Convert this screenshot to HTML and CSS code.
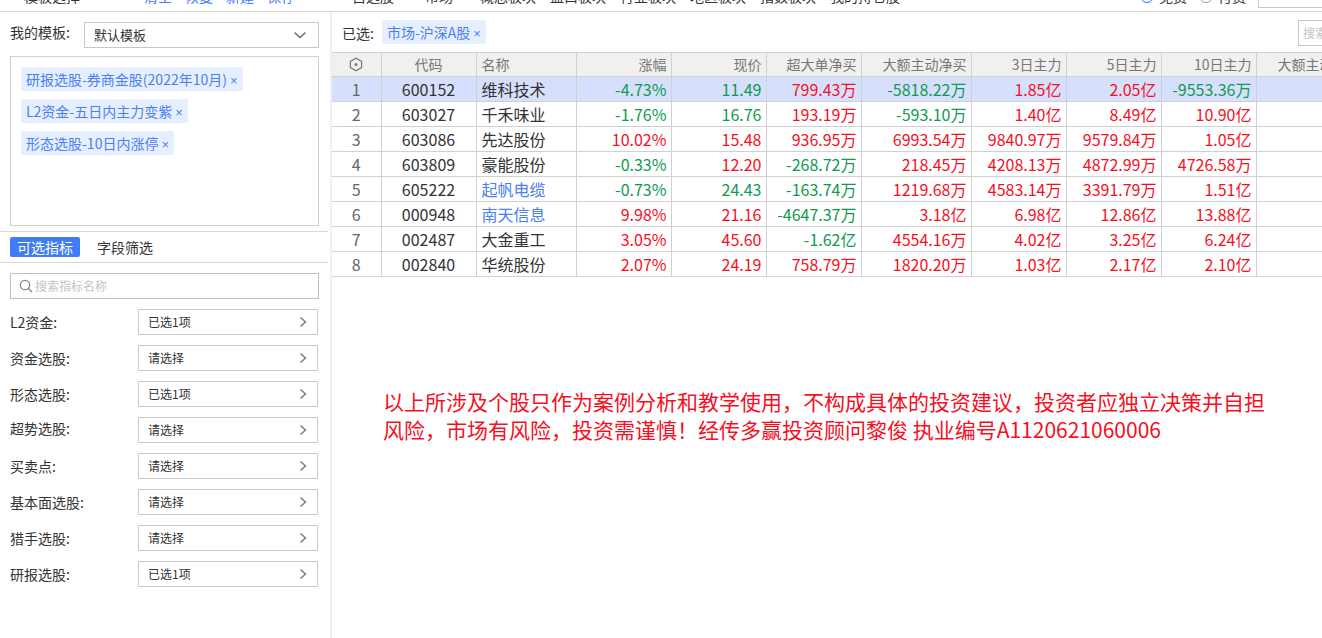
FILE: index.html
```html
<!DOCTYPE html>
<html lang="zh-CN">
<head>
    <meta charset="UTF-8">
    <title>选股</title>
    <link rel="stylesheet" href="styles.css">
</head>
<body>

<div class="topbar">
    <div class="topbar-left">
        <span class="dot"></span>
        <span class="topbar-title">模板选择</span>
        <a class="top-link first">清空</a>
        <a class="top-link">恢复</a>
        <a class="top-link">新建</a>
        <a class="top-link">保存</a>
        <svg class="top-icon" width="14" height="14" viewBox="0 0 14 14"><circle cx="5" cy="7" r="3.5" fill="none" stroke="#555"/><circle cx="10" cy="7" r="3.5" fill="none" stroke="#555"/></svg>
    </div>
    <div class="topbar-right">
        <span class="market first">自选股</span>
        <span class="market second">市场</span>
        <span class="market">概念板块</span>
        <span class="market">盘口板块</span>
        <span class="market">行业板块</span>
        <span class="market">地区板块</span>
        <span class="market">指数板块</span>
        <span class="market">我的持仓股</span>
        <span class="radio on"></span>
        <span class="radio-text">免费</span>
        <span class="radio"></span>
        <span class="radio-text">付费</span>
        <span class="top-search"></span>
    </div>
</div>

<div class="main">
    <div class="sidebar">
        <div class="template-row">
            <span class="label">我的模板:</span>
            <div class="select">
                <span>默认模板</span>
                <svg width="14" height="8" viewBox="0 0 14 8"><path d="M1.5 1.5 7 6.5l5.5-5" fill="none" stroke="#666" stroke-width="1.4"/></svg>
            </div>
        </div>
        <div class="tag-box">
            <span class="tag">研报选股-券商金股(2022年10月)<i>×</i></span>
            <span class="tag">L2资金-五日内主力变紫<i>×</i></span>
            <span class="tag">形态选股-10日内涨停<i>×</i></span>
        </div>

        <div class="tabs">
            <span class="tab active">可选指标</span>
            <span class="tab">字段筛选</span>
        </div>

        <div class="search">
            <svg width="14" height="14" viewBox="0 0 14 14"><circle cx="6" cy="6" r="4.7" fill="none" stroke="#888" stroke-width="1.2"/><path d="M9.5 9.5 13 13" stroke="#888" stroke-width="1.4"/></svg>
            <span>搜索指标名称</span>
        </div>

        <div class="filters">
            <div class="filter"><span class="label">L2资金:</span><div class="picker"><span>已选1项</span><svg class="chev" width="8" height="12" viewBox="0 0 8 12"><path d="M1.5 1.5 6.5 6l-5 4.5" fill="none" stroke="#777" stroke-width="1.4"/></svg></div></div>
            <div class="filter"><span class="label">资金选股:</span><div class="picker"><span>请选择</span><svg class="chev" width="8" height="12" viewBox="0 0 8 12"><path d="M1.5 1.5 6.5 6l-5 4.5" fill="none" stroke="#777" stroke-width="1.4"/></svg></div></div>
            <div class="filter"><span class="label">形态选股:</span><div class="picker"><span>已选1项</span><svg class="chev" width="8" height="12" viewBox="0 0 8 12"><path d="M1.5 1.5 6.5 6l-5 4.5" fill="none" stroke="#777" stroke-width="1.4"/></svg></div></div>
            <div class="filter"><span class="label raised">超势选股:</span><div class="picker"><span>请选择</span><svg class="chev" width="8" height="12" viewBox="0 0 8 12"><path d="M1.5 1.5 6.5 6l-5 4.5" fill="none" stroke="#777" stroke-width="1.4"/></svg></div></div>
            <div class="filter"><span class="label">买卖点:</span><div class="picker"><span>请选择</span><svg class="chev" width="8" height="12" viewBox="0 0 8 12"><path d="M1.5 1.5 6.5 6l-5 4.5" fill="none" stroke="#777" stroke-width="1.4"/></svg></div></div>
            <div class="filter"><span class="label">基本面选股:</span><div class="picker"><span>请选择</span><svg class="chev" width="8" height="12" viewBox="0 0 8 12"><path d="M1.5 1.5 6.5 6l-5 4.5" fill="none" stroke="#777" stroke-width="1.4"/></svg></div></div>
            <div class="filter"><span class="label">猎手选股:</span><div class="picker"><span>请选择</span><svg class="chev" width="8" height="12" viewBox="0 0 8 12"><path d="M1.5 1.5 6.5 6l-5 4.5" fill="none" stroke="#777" stroke-width="1.4"/></svg></div></div>
            <div class="filter"><span class="label">研报选股:</span><div class="picker"><span>已选1项</span><svg class="chev" width="8" height="12" viewBox="0 0 8 12"><path d="M1.5 1.5 6.5 6l-5 4.5" fill="none" stroke="#777" stroke-width="1.4"/></svg></div></div>
        </div>
    </div>

    <div class="content">
        <div class="selected-row">
            <span class="label">已选:</span>
            <span class="tag">市场-沪深A股<i>×</i></span>
            <span class="table-search">搜索</span>
        </div>

        <table class="stock-table">
            <colgroup>
                <col class="c-no"><col class="c-code"><col class="c-name"><col class="c-num"><col class="c-num">
                <col class="c-num"><col class="c-wide"><col class="c-num"><col class="c-num"><col class="c-num"><col class="c-wide">
            </colgroup>
            <thead>
                <tr>
                    <th class="center"><svg width="14" height="15" viewBox="0 0 14 15"><path d="M7 1.2 12.6 4.4v6.2L7 13.8 1.4 10.6V4.4z" fill="none" stroke="#777" stroke-width="1.2"/><circle cx="7" cy="7.5" r="1.5" fill="#777"/></svg></th>
                    <th class="center">代码</th>
                    <th class="left">名称</th>
                    <th>涨幅</th><th>现价</th><th>超大单净买</th><th>大额主动净买</th><th>3日主力</th><th>5日主力</th><th>10日主力</th><th>大额主动净买</th>
                </tr>
            </thead>
            <tbody>
                <tr class="active">
                    <td class="center no">1</td><td class="center">600152</td><td class="left">维科技术</td>
                    <td class="down">-4.73%</td><td class="down">11.49</td><td class="up">799.43万</td><td class="down">-5818.22万</td><td class="up">1.85亿</td><td class="up">2.05亿</td><td class="down">-9553.36万</td><td></td>
                </tr>
                <tr>
                    <td class="center no">2</td><td class="center">603027</td><td class="left">千禾味业</td>
                    <td class="down">-1.76%</td><td class="down">16.76</td><td class="up">193.19万</td><td class="down">-593.10万</td><td class="up">1.40亿</td><td class="up">8.49亿</td><td class="up">10.90亿</td><td></td>
                </tr>
                <tr>
                    <td class="center no">3</td><td class="center">603086</td><td class="left">先达股份</td>
                    <td class="up">10.02%</td><td class="up">15.48</td><td class="up">936.95万</td><td class="up">6993.54万</td><td class="up">9840.97万</td><td class="up">9579.84万</td><td class="up">1.05亿</td><td></td>
                </tr>
                <tr>
                    <td class="center no">4</td><td class="center">603809</td><td class="left">豪能股份</td>
                    <td class="down">-0.33%</td><td class="up">12.20</td><td class="down">-268.72万</td><td class="up">218.45万</td><td class="up">4208.13万</td><td class="up">4872.99万</td><td class="up">4726.58万</td><td></td>
                </tr>
                <tr>
                    <td class="center no">5</td><td class="center">605222</td><td class="left link">起帆电缆</td>
                    <td class="down">-0.73%</td><td class="down">24.43</td><td class="down">-163.74万</td><td class="up">1219.68万</td><td class="up">4583.14万</td><td class="up">3391.79万</td><td class="up">1.51亿</td><td></td>
                </tr>
                <tr>
                    <td class="center no">6</td><td class="center">000948</td><td class="left link">南天信息</td>
                    <td class="up">9.98%</td><td class="up">21.16</td><td class="down">-4647.37万</td><td class="up">3.18亿</td><td class="up">6.98亿</td><td class="up">12.86亿</td><td class="up">13.88亿</td><td></td>
                </tr>
                <tr>
                    <td class="center no">7</td><td class="center">002487</td><td class="left">大金重工</td>
                    <td class="up">3.05%</td><td class="up">45.60</td><td class="down">-1.62亿</td><td class="up">4554.16万</td><td class="up">4.02亿</td><td class="up">3.25亿</td><td class="up">6.24亿</td><td></td>
                </tr>
                <tr>
                    <td class="center no">8</td><td class="center">002840</td><td class="left">华统股份</td>
                    <td class="up">2.07%</td><td class="up">24.19</td><td class="up">758.79万</td><td class="up">1820.20万</td><td class="up">1.03亿</td><td class="up">2.17亿</td><td class="up">2.10亿</td><td></td>
                </tr>
            </tbody>
        </table>

        <p class="notice">以上所涉及个股只作为案例分析和教学使用，不构成具体的投资建议，投资者应独立决策并自担风险，市场有风险，投资需谨慎！经传多赢投资顾问黎俊 执业编号A1120621060006</p>
    </div>
</div>

</body>
</html>
```

FILE: styles.css
```css
* {
    box-sizing: border-box;
}

html, body {
    height: 100%;
}

body {
    margin: 0;
    background-color: #ffffff;
    color: #333333;
    font-family: "Noto Sans CJK SC", "Noto Sans", sans-serif;
    font-size: 14px;
    overflow: hidden;
}

/* top bar, scrolled so only the lower part of its text shows */
.topbar {
    display: flex;
    height: 12px;
    border-bottom: 1px solid #d4d4d4;
    overflow: hidden;
}

.topbar-left,
.topbar-right {
    display: flex;
    align-items: center;
    height: 20px;
    margin-top: -14px;
    line-height: 20px;
    white-space: nowrap;
}

.topbar-left {
    width: 332px;
    flex-shrink: 0;
    padding-left: 10px;
}

.topbar-right {
    flex: 1;
    min-width: 0;
    padding-left: 20px;
}

.dot {
    width: 4px;
    height: 4px;
    margin-right: 10px;
    border-radius: 50%;
    background-color: #3f7cf6;
}

.top-link {
    margin-right: 13px;
    color: #3f7cf6;
}

.top-link.first {
    margin-left: 64px;
}

.top-icon {
    margin-left: 1px;
    flex-shrink: 0;
}

.market {
    margin-right: 14px;
    flex-shrink: 0;
}

.market.first {
    margin-right: 31px;
}

.market.second {
    margin-right: 27px;
}

.radio {
    width: 14px;
    height: 14px;
    margin-right: 5px;
    flex-shrink: 0;
    border: 1px solid #999999;
    border-radius: 50%;
}

.radio.on {
    margin-left: 226px;
    border: 1px solid #3f7cf6;
    box-shadow: inset 0 0 0 2px #ffffff, inset 0 0 0 6px #3f7cf6;
}

.radio-text {
    margin-right: 12px;
    flex-shrink: 0;
}

.top-search {
    width: 80px;
    height: 22px;
    margin-top: 2px;
    flex-shrink: 0;
    border: 1px solid #c8c8c8;
}

.main {
    display: flex;
    height: calc(100% - 12px);
}

/* left panel */
.sidebar {
    width: 332px;
    flex-shrink: 0;
    border-right: 2px solid #f0f0f0;
}

.label {
    font-size: 14px;
    line-height: 20px;
    color: #333333;
    white-space: nowrap;
}

.template-row {
    display: flex;
    align-items: center;
    gap: 14px;
    margin: 10px 11px 8px 10px;
}

.template-row .label {
    margin-top: -6px;
}

.select {
    flex: 1;
    display: flex;
    align-items: center;
    justify-content: space-between;
    height: 26px;
    padding: 0 11px 2px 9px;
    border: 1px solid #c8c8c8;
    font-size: 13px;
}

.select svg {
    margin-top: 2px;
}

.tag-box {
    display: flex;
    flex-direction: column;
    align-items: flex-start;
    gap: 8px;
    height: 170px;
    margin: 0 11px 0 10px;
    padding: 10px;
    border: 1px solid #d0d0d0;
}

.tag {
    display: inline-block;
    height: 24px;
    padding: 0 5px;
    border-radius: 2px;
    background-color: #e6efff;
    color: #4a7ff2;
    font-size: 14px;
    line-height: 24px;
    white-space: nowrap;
}

.tag i {
    margin-left: 3px;
    font-family: "Liberation Sans", sans-serif;
    font-size: 13px;
    font-style: normal;
}

.tabs {
    display: flex;
    align-items: center;
    gap: 17px;
    height: 32px;
    margin: 5px 2px 10px 0;
    padding-left: 10px;
    border-top: 1px solid #d8d8d8;
    border-bottom: 1px solid #d8d8d8;
}

.tab {
    height: 20px;
    line-height: 20px;
    font-size: 14px;
}

.tab.active {
    width: 70px;
    border-radius: 2px;
    background-color: #3f7cf6;
    color: #ffffff;
    text-align: center;
}

.search {
    display: flex;
    align-items: center;
    gap: 2px;
    height: 26px;
    margin: 0 11px 10px 10px;
    padding: 0 0 2px 8px;
    border: 1px solid #c0c0c0;
    color: #c4c4c4;
    font-size: 12px;
}

.search svg {
    margin-top: 2px;
}

.filters {
    display: flex;
    flex-direction: column;
    gap: 10px;
    margin: 0 12px 0 10px;
}

.filter {
    display: flex;
    align-items: center;
    justify-content: space-between;
    height: 26px;
}

.filter .label.raised {
    margin-top: -5px;
}

.picker {
    display: flex;
    align-items: center;
    justify-content: space-between;
    width: 180px;
    height: 26px;
    padding: 0 10px 2px 9px;
    border: 1px solid #c8c8c8;
    font-size: 12px;
}

.chev {
    margin-top: 2px;
}

/* right panel */
.content {
    flex: 1;
    min-width: 0;
    overflow: hidden;
}

.selected-row {
    display: flex;
    align-items: center;
    gap: 8px;
    height: 40px;
    padding-left: 10px;
}

.selected-row .label {
    margin-top: 2px;
}

.table-search {
    width: 30px;
    height: 26px;
    margin: 2px -6px 0 auto;
    padding-left: 4px;
    flex-shrink: 0;
    border: 1px solid #c8c8c8;
    color: #c4c4c4;
    font-size: 12px;
    line-height: 24px;
    white-space: nowrap;
}

.stock-table {
    width: 1034px;
    table-layout: fixed;
    border-collapse: collapse;
    font-size: 16px;
}

.c-no {
    width: 49px;
}

.c-code {
    width: 95px;
}

.c-name {
    width: 100px;
}

.c-num {
    width: 95px;
}

.c-wide {
    width: 110px;
}

.stock-table th,
.stock-table td {
    height: 25px;
    padding: 0 4px 0 0;
    border: 1px solid #d0d0d0;
    border-left: none;
    text-align: right;
    line-height: 23px;
    white-space: nowrap;
    overflow: hidden;
}

.stock-table th {
    height: 23px;
    background-color: #f0f0f0;
    color: #777777;
    font-size: 14px;
    font-weight: normal;
}

.stock-table th svg {
    display: block;
    margin: 0 auto;
}

.stock-table .center {
    padding: 0;
    text-align: center;
}

.stock-table .left {
    padding: 0 0 0 5px;
    text-align: left;
}

.stock-table .active td {
    background-color: #d6e0fd;
}

.no {
    color: #666666;
}

.up {
    color: #f5101f;
}

.down {
    color: #0f9a4f;
}

.stock-table .link {
    color: #4a80f0;
}

.notice {
    width: 890px;
    margin: 110px 0 0 51px;
    color: #f5101f;
    font-size: 21px;
    line-height: 28px;
}
```
